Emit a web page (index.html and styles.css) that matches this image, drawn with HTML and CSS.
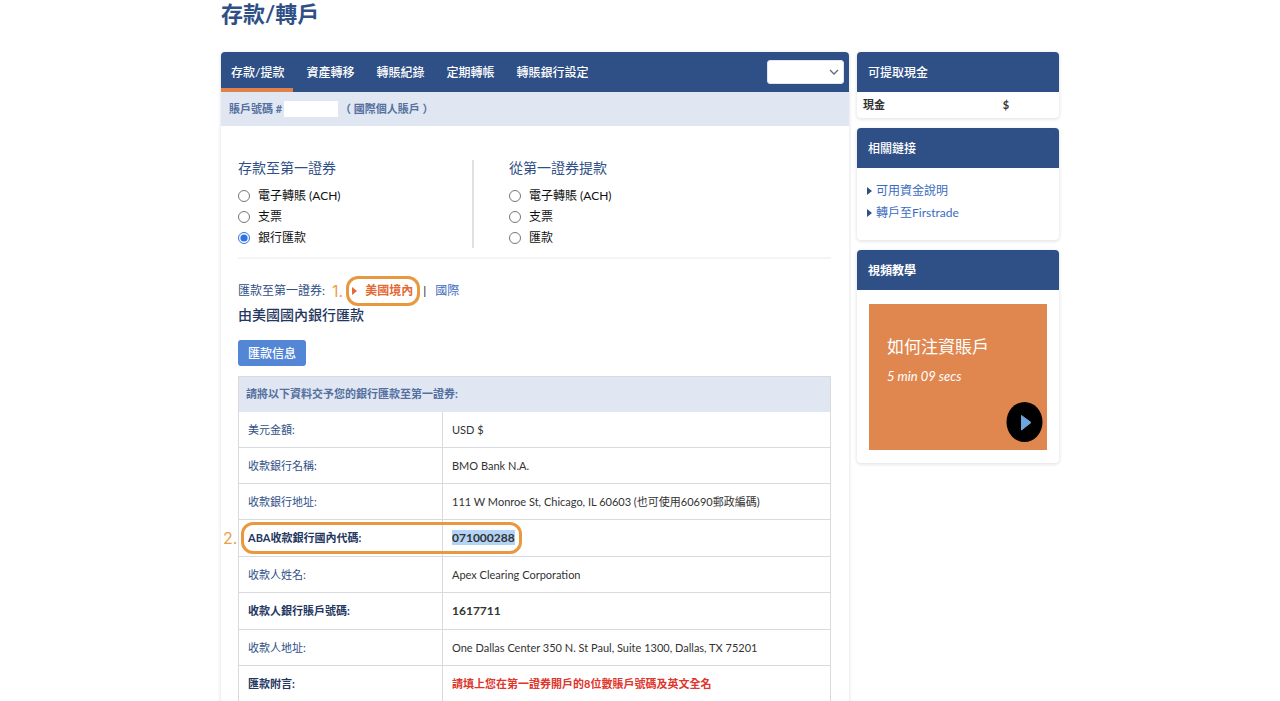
FILE: index.html
```html
<!DOCTYPE html>
<html lang="zh-Hant">
<head>
<meta charset="utf-8">
<meta name="viewport" content="width=device-width, initial-scale=1">
<title>存款/轉戶</title>
<link rel="stylesheet" href="styles.css">
</head>
<body>
<div class="page">
  <h1 class="page-title">存款/轉戶</h1>
  <div class="columns">
    <main class="panel main-panel">
      <div class="topbar">
        <nav class="tabs">
          <a class="tab tab-active" href="#">存款/提款</a>
          <a class="tab" href="#">資產轉移</a>
          <a class="tab" href="#">轉賬紀錄</a>
          <a class="tab" href="#">定期轉帳</a>
          <a class="tab" href="#">轉賬銀行設定</a>
        </nav>
        <div class="picker">
          <select class="picker-select" aria-label="賬戶"><option></option></select>
          <svg class="picker-arrow" viewBox="0 0 10 6" aria-hidden="true"><path d="M1 1l4 4 4-4" fill="none" stroke="#5b6b80" stroke-width="1.3"/></svg>
        </div>
      </div>
      <div class="account">
        <span>賬戶號碼 #</span><span class="account-mask"></span><span>（ 國際個人賬戶 ）</span>
      </div>

      <div class="content">
        <form class="choices">
          <fieldset class="choice choice-in">
            <legend class="choice-title">存款至第一證券</legend>
            <label class="option"><input class="radio" type="radio" name="transfer">電子轉賬 (ACH)</label>
            <label class="option"><input class="radio" type="radio" name="transfer">支票</label>
            <label class="option"><input class="radio" type="radio" name="transfer" checked>銀行匯款</label>
          </fieldset>
          <fieldset class="choice choice-out">
            <legend class="choice-title">從第一證券提款</legend>
            <label class="option"><input class="radio" type="radio" name="transfer">電子轉賬 (ACH)</label>
            <label class="option"><input class="radio" type="radio" name="transfer">支票</label>
            <label class="option"><input class="radio" type="radio" name="transfer">匯款</label>
          </fieldset>
        </form>

        <div class="region">
          <span class="region-label">匯款至第一證券:</span>
          <span class="step">1.</span>
          <a class="region-current" href="#"><svg class="marker" viewBox="0 0 5 8" aria-hidden="true"><path d="M0 0l5 4-5 4z" fill="currentColor"/></svg>美國境內</a>
          <span class="region-bar">|</span>
          <a class="link" href="#">國際</a>
        </div>
        <h2 class="subtitle">由美國國內銀行匯款</h2>
        <button class="info-button" type="button">匯款信息</button>

        <table class="details">
          <colgroup><col class="col-name"><col></colgroup>
          <thead>
            <tr><th class="details-head" colspan="2">請將以下資料交予您的銀行匯款至第一證券:</th></tr>
          </thead>
          <tbody>
            <tr class="row"><th scope="row">美元金額:</th><td>USD $</td></tr>
            <tr class="row"><th scope="row">收款銀行名稱:</th><td>BMO Bank N.A.</td></tr>
            <tr class="row"><th scope="row">收款銀行地址:</th><td>111 W Monroe St, Chicago, IL 60603 (也可使用60690郵政編碼)</td></tr>
            <tr class="row row-strong"><th class="marked" scope="row">ABA收款銀行國內代碼:<span class="step step-side">2.</span><span class="ring"></span></th><td><mark class="picked">071000288</mark></td></tr>
            <tr class="row"><th scope="row">收款人姓名:</th><td>Apex Clearing Corporation</td></tr>
            <tr class="row row-strong"><th scope="row">收款人銀行賬戶號碼:</th><td>1617711</td></tr>
            <tr class="row"><th scope="row">收款人地址:</th><td>One Dallas Center 350 N. St Paul, Suite 1300, Dallas, TX 75201</td></tr>
            <tr class="row row-strong"><th scope="row">匯款附言:</th><td class="warning">請填上您在第一證券開戶的8位數賬戶號碼及英文全名</td></tr>
          </tbody>
        </table>
      </div>
    </main>

    <aside class="side">
      <section class="panel">
        <h2 class="panel-title">可提取現金</h2>
        <div class="cash"><span>現金</span><span>$</span></div>
      </section>
      <section class="panel">
        <h2 class="panel-title">相關鏈接</h2>
        <ul class="links">
          <li><a class="link side-link" href="#"><svg class="marker" viewBox="0 0 5 8" aria-hidden="true"><path d="M0 0l5 4-5 4z" fill="#2f4f87"/></svg>可用資金說明</a></li>
          <li><a class="link side-link" href="#"><svg class="marker" viewBox="0 0 5 8" aria-hidden="true"><path d="M0 0l5 4-5 4z" fill="#2f4f87"/></svg>轉戶至Firstrade</a></li>
        </ul>
      </section>
      <section class="panel">
        <h2 class="panel-title panel-title-bold">視頻教學</h2>
        <div class="video">
          <h3 class="video-title">如何注資賬戶</h3>
          <p class="video-time">5 min 09 secs</p>
          <button class="play" type="button" aria-label="播放"><svg class="play-icon" viewBox="0 0 36 40" aria-hidden="true"><ellipse cx="18" cy="20" rx="18" ry="20" fill="#000"/><path d="M15 13.500l9.500 7-9.500 7.500z" fill="#6ea5e0" stroke="#6ea5e0" stroke-linejoin="round"/></svg></button>
        </div>
      </section>
    </aside>
  </div>
</div>
</body>
</html>
```
FILE: styles.css
```css
* {
  box-sizing: border-box;
}

body {
  margin: 0;
  height: 100vh;
  overflow: hidden;
  background: #fff;
  color: #333;
  font-family: "Lato", "Noto Sans CJK TC", sans-serif;
  font-size: 12px;
  line-height: 20px;
}

a {
  text-decoration: none;
}

.page {
  max-width: 838px;
  margin: 0 auto;
}

.page-title {
  margin: 0 0 24px;
  color: #2f4f87;
  font-size: 22px;
  line-height: 28px;
  font-weight: 700;
}

.columns {
  display: grid;
  grid-template-columns: minmax(0, 628fr) minmax(0, 202fr);
  gap: 8px;
  align-items: start;
}

.panel {
  border-radius: 4px;
  background: #fff;
  box-shadow: 0 1px 3px 1px #e9e9ec;
}

.topbar {
  display: flex;
  justify-content: space-between;
  align-items: center;
  height: 40px;
  padding-right: 5px;
  border-radius: 4px 4px 0 0;
  background: #2f4f87;
}

.tabs {
  display: flex;
  gap: 3px;
}

.tab {
  padding: 6px 9px 0 10px;
  border-bottom: 4px solid transparent;
  color: #fff;
  font-weight: 500;
  line-height: 30px;
}

.tab-active {
  border-bottom-color: #e2804a;
}

.picker {
  position: relative;
  width: 77px;
  height: 24px;
}

.picker-select {
  appearance: none;
  width: 100%;
  height: 100%;
  border: 1px solid #e2e6ee;
  border-radius: 3px;
  background: #fff;
}

.picker-arrow {
  position: absolute;
  top: 9px;
  right: 5px;
  width: 10px;
  height: 6px;
  pointer-events: none;
}

.account {
  display: flex;
  align-items: center;
  height: 34px;
  padding-left: 8px;
  background: #e0e7f2;
  color: #5570a0;
  font-size: 11px;
  font-weight: 700;
}

.account-mask {
  width: 54px;
  height: 16px;
  margin: 0 2px;
  background: #fff;
}

.content {
  padding: 34px 18px 0 17px;
}

.choices {
  display: grid;
  grid-template-columns: 236fr 357fr;
  padding-bottom: 9px;
  border-bottom: 2px solid #f3f4f6;
}

.choice {
  min-width: 0;
  height: 88px;
  margin: 0;
  padding: 0;
  border: 0;
}

.choice-in {
  border-right: 2px solid #e0e1e4;
}

.choice-out {
  padding-left: 35px;
}

.choice-title {
  float: left;
  width: 100%;
  margin-bottom: 9px;
  padding: 0;
  color: #2f4f87;
  font-size: 14px;
  line-height: 16px;
}

.option {
  display: flex;
  clear: both;
  align-items: center;
  gap: 8px;
  height: 21px;
  color: #111;
}

.radio {
  width: 12px;
  height: 12px;
  margin: 0;
  accent-color: #2f73e0;
}

.region {
  display: flex;
  align-items: center;
  gap: 3px;
  margin-top: 17px;
  color: #2f4f87;
}

.region-label {
  margin-right: 4px;
}

.step {
  color: #eaa04a;
  font-family: "Inter", sans-serif;
  font-size: 16px;
  line-height: 30px;
  font-weight: 400;
}

.region-current {
  display: flex;
  align-items: center;
  gap: 8px;
  height: 30px;
  padding: 0 4px 0 3px;
  border: 3px solid #e8993f;
  border-radius: 12px;
  color: #e36a35;
  font-weight: 700;
}

.marker {
  width: 5px;
  height: 8px;
}

.region-bar {
  color: #222;
}

.link {
  color: #3b6bc0;
}

.region .link {
  margin-left: 6px;
}

.subtitle {
  margin: 0;
  color: #1f3761;
  font-size: 14px;
  line-height: 18px;
  font-weight: 500;
}

.info-button {
  display: block;
  height: 26px;
  margin: 16px 0 10px;
  padding: 2px 10px 0;
  border: 0;
  border-radius: 3px;
  background: #5486d6;
  color: #fff;
  font: inherit;
  font-weight: 500;
}

.details {
  width: 100%;
  border-collapse: collapse;
  table-layout: fixed;
}

.col-name {
  width: 204px;
}

.details th,
.details td {
  padding: 0 9px;
  border: 1px solid #d9dadd;
  text-align: left;
  font-size: 11px;
  font-weight: 400;
}

.details th {
  color: #2f4f87;
}

.details .details-head {
  height: 35px;
  padding: 0 7px;
  border-bottom-color: #e0e7f2;
  background: #e0e7f2;
  color: #5570a0;
  font-weight: 700;
}

.row {
  height: 36px;
}

.row-strong {
  height: 37px;
}

.details .row-strong th {
  color: #1f3761;
  font-weight: 700;
}

.details .row-strong td {
  font-size: 12px;
  font-weight: 700;
}

.details .marked {
  position: relative;
}

.step-side {
  position: absolute;
  top: 3px;
  left: -16px;
}

.ring {
  position: absolute;
  top: 2px;
  left: 2px;
  width: 281px;
  height: 32px;
  border: 3px solid #e8993f;
  border-radius: 12px;
}

.picked {
  background: #b3d3f7;
  color: #333;
}

.details .row-strong .warning {
  color: #e0352b;
  font-size: 11px;
}

.side {
  display: grid;
  gap: 10px;
}

.panel-title {
  margin: 0;
  padding: 2px 11px 0;
  border-radius: 4px 4px 0 0;
  background: #2f4f87;
  color: #fff;
  font-size: 12px;
  font-weight: 500;
  line-height: 38px;
}

.panel-title-bold {
  margin-bottom: 14px;
  font-weight: 700;
}

.cash {
  display: grid;
  grid-template-columns: 139fr 50fr;
  padding: 3px 6px;
  font-size: 11px;
  font-weight: 700;
}

.links {
  margin: 0;
  padding: 12px 10px 16px;
  list-style: none;
  line-height: 22px;
}

.side-link {
  display: flex;
  align-items: center;
  gap: 4px;
}

.video {
  position: relative;
  height: 146px;
  margin: 0 12px;
  padding: 30px 18px;
  background: #e08750;
  color: #fff;
}

.panel:last-child {
  padding-bottom: 13px;
}

.video-title {
  margin: 0 0 6px;
  font-size: 17px;
  line-height: 26px;
  font-weight: 400;
}

.video-time {
  margin: 0;
  font-size: 13px;
  font-style: italic;
}

.play {
  position: absolute;
  right: 4px;
  bottom: 8px;
  width: 37px;
  height: 40px;
  padding: 0;
  border: 0;
  background: none;
}

.play-icon {
  display: block;
  width: 100%;
  height: 100%;
}
```
